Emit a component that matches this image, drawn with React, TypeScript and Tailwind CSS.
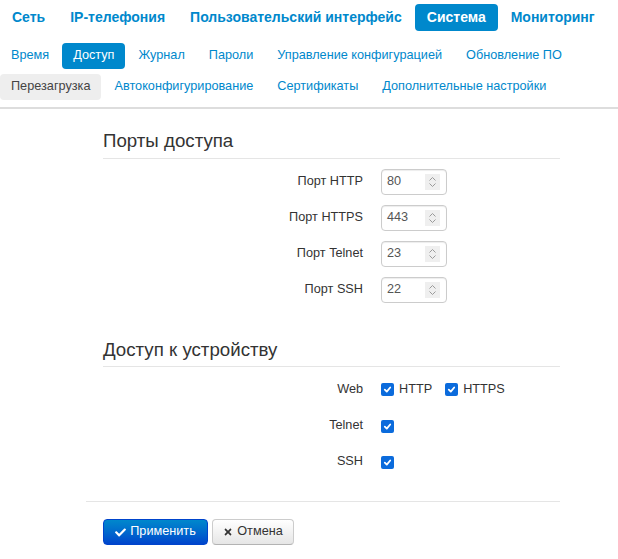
import { FaCheck, FaTimes } from 'react-icons/fa';

const topTabs = ['Сеть', 'IP-телефония', 'Пользовательский интерфейс', 'Система', 'Мониторинг'];
const subRow1 = ['Время', 'Доступ', 'Журнал', 'Пароли', 'Управление конфигурацией', 'Обновление ПО'];
const subRow2 = ['Перезагрузка', 'Автоконфигурирование', 'Сертификаты', 'Дополнительные настройки'];

const ports = [
  { label: 'Порт HTTP', value: '80' },
  { label: 'Порт HTTPS', value: '443' },
  { label: 'Порт Telnet', value: '23' },
  { label: 'Порт SSH', value: '22' },
];

function Spin() {
  return (
    <div className="w-[15px] h-[16px] bg-[#efefef] flex items-center justify-center">
      <svg width="9" height="12" viewBox="0 0 9 12" fill="none" stroke="#9a9a9a" strokeWidth="1">
        <path d="M1.5 4.5 L4.5 1.5 L7.5 4.5" />
        <path d="M1.5 7.5 L4.5 10.5 L7.5 7.5" />
      </svg>
    </div>
  );
}

function Check() {
  return (
    <span className="w-[13px] h-[13px] rounded-[2px] bg-[#0b6bdc] flex items-center justify-center shrink-0">
      <svg width="9" height="9" viewBox="0 0 10 10" fill="none" stroke="white" strokeWidth="2" strokeLinecap="round" strokeLinejoin="round">
        <path d="M2 5.2 L4.2 7.4 L8 2.8" />
      </svg>
    </span>
  );
}

function Row({ label, children }: { label: string; children: React.ReactNode }) {
  return (
    <div className="flex items-center h-[26px]">
      <div className="w-[260px] text-right text-[12.7px] text-[#333]">{label}</div>
      <div className="ml-[18px] flex items-center">{children}</div>
    </div>
  );
}

export default function App() {
  return (
    <div className="w-[618px] h-[559px] bg-white overflow-hidden" style={{ fontFamily: '"Liberation Sans", Arial, sans-serif' }}>
      <div className="pt-[4px] flex gap-[1px]">
        {topTabs.map((t) => (
          <span
            key={t}
            className={
              'h-[27px] flex items-center px-3 rounded-[4px] text-[14px] font-bold ' +
              (t === 'Система' ? 'bg-[#0088cc] text-white' : 'text-[#0088cc]')
            }
          >
            {t}
          </span>
        ))}
      </div>
      <div className="mt-[12px] flex gap-[2px]">
        {subRow1.map((t) => (
          <span
            key={t}
            className={
              'h-[26px] flex items-center px-[11px] rounded-[4px] text-[12.7px] ' +
              (t === 'Доступ' ? 'bg-[#0088cc] text-white' : 'text-[#0088cc]')
            }
          >
            {t}
          </span>
        ))}
      </div>
      <div className="mt-[5px] flex gap-[2px]">
        {subRow2.map((t) => (
          <span
            key={t}
            className={
              'h-[26px] flex items-center px-[11px] rounded-[4px] text-[12.7px] ' +
              (t === 'Перезагрузка' ? 'bg-[#eeeeee] text-[#444]' : 'text-[#0088cc]')
            }
          >
            {t}
          </span>
        ))}
      </div>
      <div className="mt-[7px] h-[2px] bg-[#dddddd]" />

      <div className="ml-[86px] w-[474px]">
        <div className="pl-[17px]">
          <div className="mt-[20px] border-b border-[#e5e5e5] pb-[5px] text-[18.7px] leading-[24px] text-[#333]">Порты доступа</div>
          <div className="mt-[10px] flex flex-col gap-[10px]">
            {ports.map((p) => (
              <Row key={p.label} label={p.label}>
                <div className="w-[66px] h-[26px] border border-[#cccccc] rounded-[4px] shadow-[inset_0_1px_1px_rgba(0,0,0,0.075)] flex items-center justify-between pl-[5px] pr-[6px] text-[12.7px] text-[#555]">
                  <span>{p.value}</span>
                  <Spin />
                </div>
              </Row>
            ))}
          </div>

          <div className="mt-[35px] border-b border-[#e5e5e5] pb-[4px] text-[18.7px] leading-[24px] text-[#333]">Доступ к устройству</div>
          <div className="mt-[10px] flex flex-col gap-[10px]">
            <Row label="Web">
              <Check />
              <span className="ml-[5px] text-[12.7px] text-[#333]">HTTP</span>
              <span className="ml-[13px]"><Check /></span>
              <span className="ml-[5px] text-[12.7px] text-[#333]">HTTPS</span>
            </Row>
            <Row label="Telnet">
              <Check />
            </Row>
            <Row label="SSH">
              <Check />
            </Row>
          </div>
        </div>

        <div className="mt-[26px] border-t border-[#e5e5e5] pt-[17px] pl-[17px] flex gap-[4px]">
          <button className="h-[26px] w-[105px] rounded-[4px] border border-[#0044cc] bg-gradient-to-b from-[#0088cc] to-[#0044cc] text-white text-[12.7px] flex items-center justify-center gap-[4px]">
            <FaCheck className="w-[11px] h-[11px]" />
            Применить
          </button>
          <button className="h-[26px] w-[82px] rounded-[4px] border border-[#cccccc] border-b-[#b3b3b3] bg-gradient-to-b from-white to-[#e6e6e6] text-[#333] text-[12.7px] flex items-center justify-center gap-[4px]">
            <FaTimes className="w-[10px] h-[10px]" />
            Отмена
          </button>
        </div>
      </div>
    </div>
  );
}
